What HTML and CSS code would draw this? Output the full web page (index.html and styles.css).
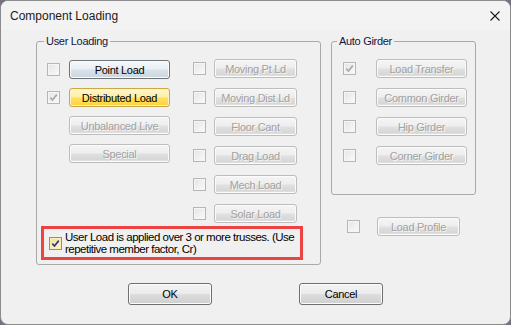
FILE: index.html
```html
<!DOCTYPE html>
<html lang="en">
<head>
    <meta charset="UTF-8">
    <title>Component Loading</title>
    <link rel="stylesheet" href="styles.css">
</head>
<body>
    <div class="window">
        <div class="titlebar">
            <span class="title">Component Loading</span>
            <svg class="close" width="10" height="10" viewBox="0 0 10 10">
                <path d="M0.5 0.5 L9.5 9.5 M9.5 0.5 L0.5 9.5" stroke="#1b1b1b" stroke-width="1.1" fill="none"/>
            </svg>
        </div>
        <div class="client">
            <div class="groups">
                <fieldset class="group user-group">
                    <legend>User Loading</legend>
                    <div class="user-cols">
                        <div class="col col-left">
                            <div class="row"><span class="cb"></span><button class="btn btn-wide btn-focus">Point Load</button></div>
                            <div class="row">
                                <span class="cb"><svg viewBox="0 0 11 11"><path class="tick tick-off" d="M2.3 5.6 L4.5 8 L8.8 2.6"/></svg></span>
                                <button class="btn btn-wide btn-hot">Distributed Load</button>
                            </div>
                            <div class="row"><span class="cb-gap"></span><button class="btn btn-wide" disabled>Unbalanced Live</button></div>
                            <div class="row"><span class="cb-gap"></span><button class="btn btn-wide" disabled>Special</button></div>
                        </div>
                        <div class="col col-mid">
                            <div class="row"><span class="cb"></span><button class="btn btn-mid" disabled>Moving Pt Ld</button></div>
                            <div class="row"><span class="cb"></span><button class="btn btn-mid" disabled>Moving Dist Ld</button></div>
                            <div class="row"><span class="cb"></span><button class="btn btn-mid" disabled>Floor Cant</button></div>
                            <div class="row"><span class="cb"></span><button class="btn btn-mid" disabled>Drag Load</button></div>
                            <div class="row"><span class="cb"></span><button class="btn btn-mid" disabled>Mech Load</button></div>
                            <div class="row"><span class="cb"></span><button class="btn btn-mid" disabled>Solar Load</button></div>
                        </div>
                    </div>
                    <label class="highlight">
                        <span class="cb cb-on"><svg viewBox="0 0 11 11"><path class="tick" d="M2.3 5.6 L4.5 8 L8.8 2.6"/></svg></span>
                        <span class="hl-text">User Load is applied over 3 or more trusses. (Use<br>repetitive member factor, Cr)</span>
                    </label>
                </fieldset>
                <div class="right-side">
                    <fieldset class="group auto-group">
                        <legend>Auto Girder</legend>
                        <div class="auto-rows">
                            <div class="row">
                                <span class="cb"><svg viewBox="0 0 11 11"><path class="tick tick-off" d="M2.3 5.6 L4.5 8 L8.8 2.6"/></svg></span>
                                <button class="btn btn-auto" disabled>Load Transfer</button>
                            </div>
                            <div class="row"><span class="cb"></span><button class="btn btn-auto" disabled>Common Girder</button></div>
                            <div class="row"><span class="cb"></span><button class="btn btn-auto" disabled>Hip Girder</button></div>
                            <div class="row"><span class="cb"></span><button class="btn btn-auto" disabled>Corner Girder</button></div>
                        </div>
                    </fieldset>
                    <div class="row profile-row"><span class="cb"></span><button class="btn btn-mid" disabled>Load Profile</button></div>
                </div>
            </div>
            <div class="footer">
                <button class="btn btn-dlg">OK</button>
                <button class="btn btn-dlg">Cancel</button>
            </div>
        </div>
    </div>
</body>
</html>
```

FILE: styles.css
```css
:root {
    --face-color: #f0f0f0;
    --title-color: #f3f3f3;
    --group-border: #a9a9a9;
    --disabled-text: #a2a2a2;
    --mark-color: #ee4343;
}

html, body {
    margin: 0;
}

body {
    background-color: #76717e;
    font-family: "Liberation Sans", Arial, sans-serif;
    font-size: 11px;
    letter-spacing: -0.3px;
    color: #000;
}

.window {
    width: 511px;
    height: 325px;
    box-sizing: border-box;
    border: 1px solid #8c8c8c;
    border-radius: 8px;
    overflow: hidden;
    display: flex;
    flex-direction: column;
    background-color: var(--face-color);
}

.titlebar {
    height: 29px;
    flex: none;
    background-color: var(--title-color);
    display: flex;
    align-items: center;
    justify-content: space-between;
    padding: 0 10px 0 9px;
}

.title {
    font-size: 12px;
    letter-spacing: 0;
    color: #1b1b1b;
}

.close {
    display: block;
}

.client {
    flex: 1;
    padding-top: 5px;
}

.groups {
    display: flex;
    align-items: flex-start;
    gap: 10px;
    padding-left: 35px;
}

/* Group boxes */
.group {
    margin: 0;
    padding: 0 4px 4px;
    border: 1px solid var(--group-border);
    border-radius: 3px;
    box-sizing: border-box;
    min-width: 0;
}

.group legend {
    padding: 0 2px;
    margin-left: 3px;
    line-height: 12px;
    color: #14143e;
}

.user-group {
    width: 285px;
}

.auto-group {
    width: 145px;
    padding-bottom: 29px;
}

.auto-group legend {
    margin-left: 1px;
}

.user-cols {
    display: flex;
    gap: 23px;
    padding: 12px 0 0 6px;
}

.col {
    display: flex;
    flex-direction: column;
    gap: 10px;
}

.col-left {
    gap: 9px;
    padding-top: 1px;
}

.row {
    display: flex;
    align-items: center;
    gap: 9px;
    height: 19px;
}

.col-mid .row {
    gap: 8px;
}

.auto-rows {
    display: flex;
    flex-direction: column;
    gap: 10px;
    padding: 12px 0 0 7px;
}

.auto-rows .row {
    gap: 20px;
}

.profile-row {
    margin-top: 22px;
    padding-left: 16px;
    gap: 17px;
}

/* Check boxes */
.cb {
    width: 13px;
    height: 13px;
    flex: none;
    box-sizing: border-box;
    border: 1px solid #b6b6b6;
    background: linear-gradient(135deg, #e4e4e4, #fbfbfb);
    box-shadow: inset 0 0 0 1px #f6f6f6;
    display: flex;
}

.cb svg {
    width: 11px;
    height: 11px;
}

.cb-gap {
    width: 13px;
    flex: none;
}

.cb-on {
    border-color: #8a8f96;
    background: linear-gradient(135deg, #f9de8f, #fff6da);
    box-shadow: inset 0 0 0 1px #fdecb8;
}

.tick {
    fill: none;
    stroke: #25407a;
    stroke-width: 1.7;
}

.tick-off {
    stroke: #a9a9a9;
}

/* Buttons */
.btn {
    height: 19px;
    padding: 0;
    font: inherit;
    letter-spacing: inherit;
    color: #000;
    border: 1px solid #707070;
    border-radius: 3px;
    background: linear-gradient(#f3f3f3 0%, #ebebeb 48%, #dddddd 52%, #cfcfcf 100%);
    box-shadow: inset 0 0 0 1px #fbfbfb;
    flex: none;
}

.btn:disabled {
    color: var(--disabled-text);
    border-color: #bdbdbd;
    background: linear-gradient(#f5f5f5 0%, #eeeeee 45%, #e0e0e0 55%, #d7d7d7 85%, #e9e9e9 100%);
    text-shadow: 1px 1px 0 rgba(255, 255, 255, 0.8);
}

.btn-focus {
    border-color: #6f7377;
    background: linear-gradient(#f5f8fb 0%, #e9eff4 48%, #d9e2ea 52%, #cbd6df 100%);
}

.btn-hot {
    border-color: #c9a84a;
    background: linear-gradient(#fff7cf 0%, #ffeea6 45%, #ffdf60 55%, #ffd23c 100%);
    box-shadow: inset 0 0 0 1px #fff3c0;
}

.btn-wide {
    width: 101px;
}

.btn-mid {
    width: 83px;
}

.btn-auto {
    width: 91px;
}

.btn-dlg {
    width: 84px;
    height: 22px;
}

/* Highlighted option */
.highlight {
    margin-top: 3px;
    width: 262px;
    box-sizing: border-box;
    border: 3px solid var(--mark-color);
    padding: 2px 5px;
    display: flex;
    align-items: center;
    gap: 3px;
}

.hl-text {
    font-size: 11.5px;
    letter-spacing: -0.5px;
    line-height: 12px;
    white-space: nowrap;
}

.footer {
    display: flex;
    justify-content: center;
    gap: 87px;
    margin-top: 18px;
}
```
